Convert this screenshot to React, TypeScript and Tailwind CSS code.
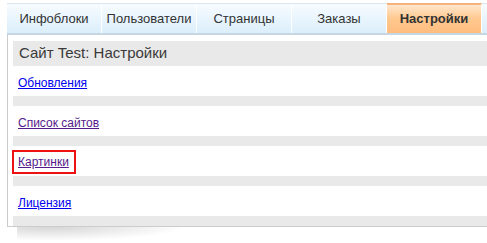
const tabs = ["Инфоблоки", "Пользователи", "Страницы", "Заказы", "Настройки"];

const links = [
	{ title: "Обновления", visited: false },
	{ title: "Список сайтов", visited: true },
	{ title: "Картинки", visited: true, marked: true },
	{ title: "Лицензия", visited: false },
];

export default function App() {
	return (
		<div
			className="w-[487px] h-[243px] overflow-hidden bg-white pl-[7px] pt-[3px]"
			style={{ fontFamily: '"Liberation Sans", Arial, sans-serif' }}
		>
			<div className="w-[520px]">
				<div className="flex h-[32px] border-t border-[#dbe6ee] border-b-2 border-b-[#c6d6e2] bg-gradient-to-b from-[#f7fcff] to-[#dbeefb]">
					{tabs.map((tab) => {
						const active = tab === "Настройки";
						return (
							<div
								key={tab}
								className={
									active
										? "w-[95px] shrink-0 flex items-center justify-center border-r border-white border-t-2 border-t-[#f4b27c] -mt-px bg-gradient-to-b from-[#ffe6cc] via-[#ffc88e] to-[#ffbd7f] text-[13px] font-bold text-[#333]"
										: "w-[95px] shrink-0 flex items-center justify-center border-r border-white text-[13px] text-[#333]"
								}
							>
								{tab}
							</div>
						);
					})}
				</div>
				<div className="border-l border-b border-[#cccccc] pt-[6px] pl-[5px]">
					<div className="h-[25px] flex items-center pl-[6px] bg-[#e9e9e9] text-[15px] text-[#3a3a3a]">
						Сайт Test: Настройки
					</div>
					{links.map((link) => (
						<div key={link.title}>
							<div className="h-[30px] flex items-center pt-[3px]">
								{link.marked ? (
									<span className="h-[24px] flex items-center border-2 border-[#ee1111] pl-[4px] pr-[5px] -ml-px -mt-[2px]">
										<a
											href="#"
											className="underline text-[12px] text-[#551a8b]"
										>
											{link.title}
										</a>
									</span>
								) : (
									<a
										href="#"
										className={
											link.visited
												? "underline text-[12px] text-[#551a8b] pl-[5px]"
												: "underline text-[12px] text-[#0000ee] pl-[5px]"
										}
									>
										{link.title}
									</a>
								)}
							</div>
							<div className="h-[10px] bg-[#e9e9e9]" />
						</div>
					))}
				</div>
				<div className="ml-[10px] w-[170px] h-[14px] bg-[radial-gradient(ellipse_at_20%_0%,rgba(0,0,0,0.16),transparent_70%)]" />
			</div>
		</div>
	);
}
